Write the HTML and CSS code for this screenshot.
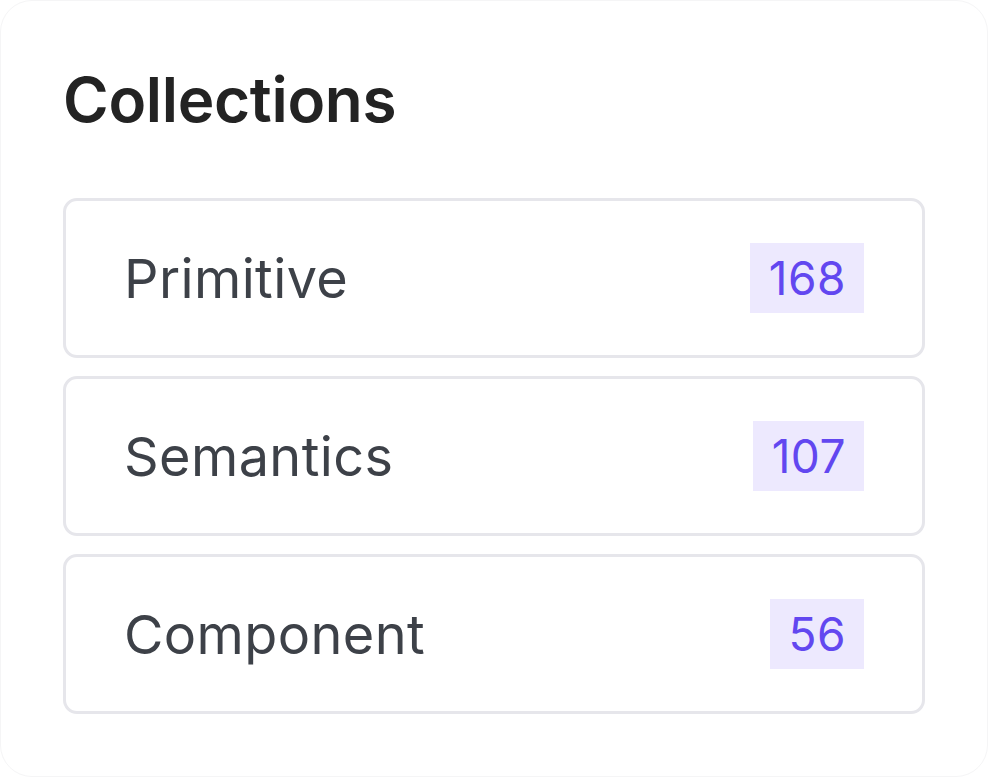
FILE: index.html
```html
<!DOCTYPE html>
<html lang="en">
<head>
<meta charset="utf-8">
<title>Collections</title>
<link rel="stylesheet" href="styles.css">
</head>
<body>
  <div class="panel">
    <h1 class="title">Collections</h1>
    <ul class="list">
      <li class="item"><span class="label">Primitive</span><span class="count">168</span></li>
      <li class="item"><span class="label">Semantics</span><span class="count">107</span></li>
      <li class="item"><span class="label">Component</span><span class="count">56</span></li>
    </ul>
  </div>
</body>
</html>
```

FILE: styles.css
```css
* { box-sizing: border-box; }
html, body { margin: 0; padding: 0; background: #ffffff; }
body { font-family: "Inter", "Noto Sans", sans-serif; }

.panel {
  width: 988px;
  height: 777px;
  border: 1px solid #f5f5f6;
  border-radius: 32px;
  padding: 61px 62px 0 62px;
  background: #ffffff;
}

.title {
  margin: 0 0 61px 0;
  font-size: 62px;
  font-weight: 600;
  line-height: 75px;
  color: #232323;
  letter-spacing: -0.3px;
}

.list {
  list-style: none;
  margin: 0;
  padding: 0;
  display: flex;
  flex-direction: column;
  gap: 18px;
}

.item {
  height: 160px;
  border: 3px solid #e6e6eb;
  border-radius: 14px;
  display: flex;
  align-items: center;
  justify-content: space-between;
  padding: 0 58px 0 58px;
}

.label {
  font-size: 54px;
  font-weight: 400;
  color: #3d4148;
  letter-spacing: 0.4px;
}

.count {
  height: 70px;
  line-height: 70px;
  padding: 0 18px 0 19px;
  background: #ede9fe;
  color: #6247f0;
  font-size: 46px;
  font-weight: 400;
  letter-spacing: 0.5px;
}
```
